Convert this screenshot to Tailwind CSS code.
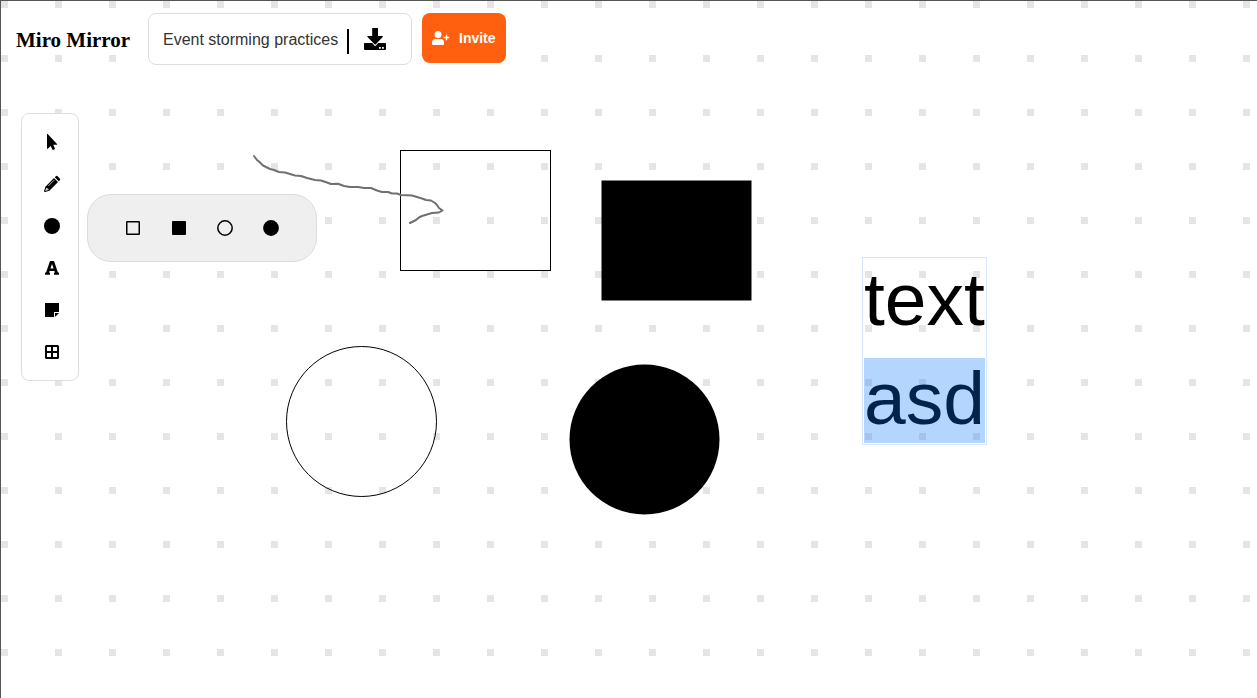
<!DOCTYPE html>
<html lang="en">
<head>
<meta charset="utf-8">
<meta name="viewport" content="width=device-width, initial-scale=1">
<title>Miro Mirror</title>
<script src="https://cdn.jsdelivr.net/npm/@tailwindcss/browser@4"></script>
</head>
<body class="bg-white text-black font-['Liberation_Sans',Arial,sans-serif]">
<main class="relative min-h-screen overflow-hidden border-t border-l border-[#555] bg-[conic-gradient(at_7px_7px,transparent_270deg,#e5e5e5_0)] bg-[length:54px_54px]">

  <!-- Drawing board: shapes, freehand line and the text object being edited -->
  <section aria-label="Board" class="absolute inset-0">
    <svg class="absolute left-0 top-0 size-full" fill="none" stroke="#000">
      <g transform="translate(-1 -1)">
        <rect x="400.5" y="150.5" width="150" height="120"/>
        <rect x="601.5" y="180.5" width="150" height="120" fill="#000" stroke="none"/>
        <circle cx="361.5" cy="421.5" r="75"/>
        <circle cx="644.5" cy="439.5" r="75" fill="#000" stroke="none"/>
        <path stroke="#707070" stroke-width="2" stroke-linecap="round" stroke-linejoin="round" d="M254 156L257 160L260 162.500L263 165.500L267 167.500L270 169L274 170L279 172L285 172.500L290 174L295 175.500L301 176L307 178L315 180L321 180.500L327 182.500L331 184L338 183.800L344 186L350 187L358 187L364 188L371 188L377 190.500L382 192L388 192L392 193.500L397 193.500L401 195L412 195.500L417 197L422 198.500L426 200L431 200.500L435 203L437 205L439 208L442.500 210.500L439 212.500L432 213L427 214.500L422 216L419 217.500L416 220L410 223"/>
      </g>
    </svg>
    <div class="absolute left-[861px] top-[256px] border border-[#d8e5ff] px-px text-[75px] leading-[99px]">
      <p class="-mt-2">text</p>
      <p class="relative h-[95px]">asd<span class="absolute left-0 right-0 top-[9px] h-[85px] bg-[#0473fd]/30"></span></p>
    </div>
  </section>

  <header class="relative flex items-start pl-[15px] pt-3">
    <h1 class="w-[132px] font-['Liberation_Serif','Times_New_Roman',serif] text-[21px] font-bold leading-[54px]">Miro Mirror</h1>
    <div class="flex h-[52px] w-[264px] items-center rounded-lg border border-[#dedede] bg-white pl-3.5">
      <span class="whitespace-nowrap pt-0.5 text-base text-[#333]">Event storming practices</span>
      <span class="ml-[9px] mt-1 h-[25px] w-0.5 bg-black"></span>
      <button type="button" aria-label="Download" class="ml-[15px]">
        <svg class="size-[22px]" viewBox="0 0 22 22"><path d="M0 15.500Q0 15 .7 15H21.300Q22 15 22 15.500V21q0 1-1 1H1q-1 0-1-1z"/><path d="M8.500 0h5.500v8h4.500L11.200 16.800 3.500 8h5z" stroke="#fff" stroke-width="2.200" stroke-linejoin="round"/><path d="M8.200 0h5.800v8h4.500q.7.200.2.900L11.600 16.400q-.4.400-.8 0L3.500 8.900Q3 8.200 3.700 8h4.500z"/><path fill="#fff" d="M15 19h1.800v1.800H15zM18 19h1.800v1.800H18z"/></svg>
      </button>
    </div>
    <button type="button" class="ml-2.5 flex h-[50px] w-[84px] items-center gap-[9px] rounded-lg bg-[#ff6010] pl-2.5 text-sm font-bold text-white">
      <svg class="h-[14px] w-[18px]" viewBox="0 0 18 14" fill="currentColor"><circle cx="6" cy="3.500" r="3.500"/><path d="M0 13v-1.500Q0 8 3.500 8h5Q12 8 12 11.500V13q0 1-1 1H1q-1 0-1-1zM13.800 3.700h1.400v2.100h2.100v1.400h-2.100v2.100h-1.400V7.200h-2.100V5.800h2.100z"/></svg>
      Invite
    </button>
  </header>

  <div class="relative mt-[46px] flex items-start gap-2 pl-5">
    <nav aria-label="Tools" class="flex w-[58px] flex-col items-center rounded-lg border border-[#dedede] bg-white py-[7px] pl-1">
      <button type="button" aria-label="Select" class="grid size-[42px] place-items-center">
        <svg class="size-5" viewBox="0 0 20 20"><path d="M5 2.200v14.300q.1.700.7.300l3-2.900 1.700 3.700q.3.500.8.300l1.400-.6q.5-.3.300-.8L11.300 12.700h3.500q.6-.1.200-.7L5.700 2q-.5-.4-.7.200z"/></svg>
      </button>
      <button type="button" aria-label="Draw" class="grid size-[42px] place-items-center">
        <svg class="size-5" viewBox="0 0 20 20"><path d="M12.800 3.200l1-1q.9-.7 1.800 0l2.200 2.200q.8.900 0 1.800l-1 1zM12 4l4 4-8.600 8.700-4.300 1.300q-1.200.2-1-1l1.300-4.300z"/><path d="M6.300 12L12.200 6.100" stroke="#aaa" stroke-width="1"/><path d="M4.200 13.500l-1 3.400 3.400-1-.3-1.500-1.600-.2z" fill="#ccc"/></svg>
      </button>
      <button type="button" aria-label="Shapes" class="grid size-[42px] place-items-center">
        <svg class="size-5" viewBox="0 0 20 20"><circle cx="10" cy="10" r="8"/></svg>
      </button>
      <button type="button" aria-label="Text" class="grid size-[42px] place-items-center">
        <svg class="size-5" viewBox="0 0 20 20"><path fill-rule="evenodd" d="M8.500 3h3q.5 0 .7.500L15.900 14.600h.6q.5 0 .5.500v1.100q0 .5-.5.500h-4q-.5 0-.5-.5v-1.100q0-.5.5-.5h.5L12.400 13H7.600L7 14.600h.5q.5 0 .5.500v1.100q0 .5-.5.500h-4q-.5 0-.5-.5v-1.100q0-.5.5-.5h.6L7.800 3.500Q8 3 8.500 3zM8.400 10.600h3.200L10 5.900z"/></svg>
      </button>
      <button type="button" aria-label="Sticky note" class="grid size-[42px] place-items-center">
        <svg class="size-5" viewBox="0 0 20 20"><path d="M3 3h14v9h-5v5H3zM13 13h4l-4 4z"/></svg>
      </button>
      <button type="button" aria-label="Table" class="grid size-[42px] place-items-center">
        <svg class="size-5" viewBox="0 0 20 20" fill="none" stroke="#000" stroke-width="2"><rect x="4" y="4" width="12" height="12" rx=".5"/><path d="M10 4v12M4 10h12"/></svg>
      </button>
    </nav>

    <div role="group" aria-label="Shapes" class="mt-[81px] flex h-[68px] w-[230px] items-center justify-center rounded-3xl border border-[#dcdcdc] bg-[#efefef]">
      <button type="button" aria-label="Rectangle outline" class="grid h-[42px] w-[46px] place-items-center">
        <svg class="size-5" viewBox="0 0 20 20" fill="none" stroke="#000" stroke-width="1.500"><rect x="3.750" y="3.750" width="12.500" height="12.500" rx=".5"/></svg>
      </button>
      <button type="button" aria-label="Filled rectangle" class="grid h-[42px] w-[46px] place-items-center">
        <svg class="size-5" viewBox="0 0 20 20"><rect x="3" y="3" width="14" height="14" rx="1"/></svg>
      </button>
      <button type="button" aria-label="Circle outline" class="grid h-[42px] w-[46px] place-items-center">
        <svg class="size-5" viewBox="0 0 20 20" fill="none" stroke="#000" stroke-width="1.500"><circle cx="10" cy="10" r="7.200"/></svg>
      </button>
      <button type="button" aria-label="Filled circle" class="grid h-[42px] w-[46px] place-items-center">
        <svg class="size-5" viewBox="0 0 20 20"><circle cx="10" cy="10" r="7.900"/></svg>
      </button>
    </div>
  </div>
</main>
</body>
</html>
